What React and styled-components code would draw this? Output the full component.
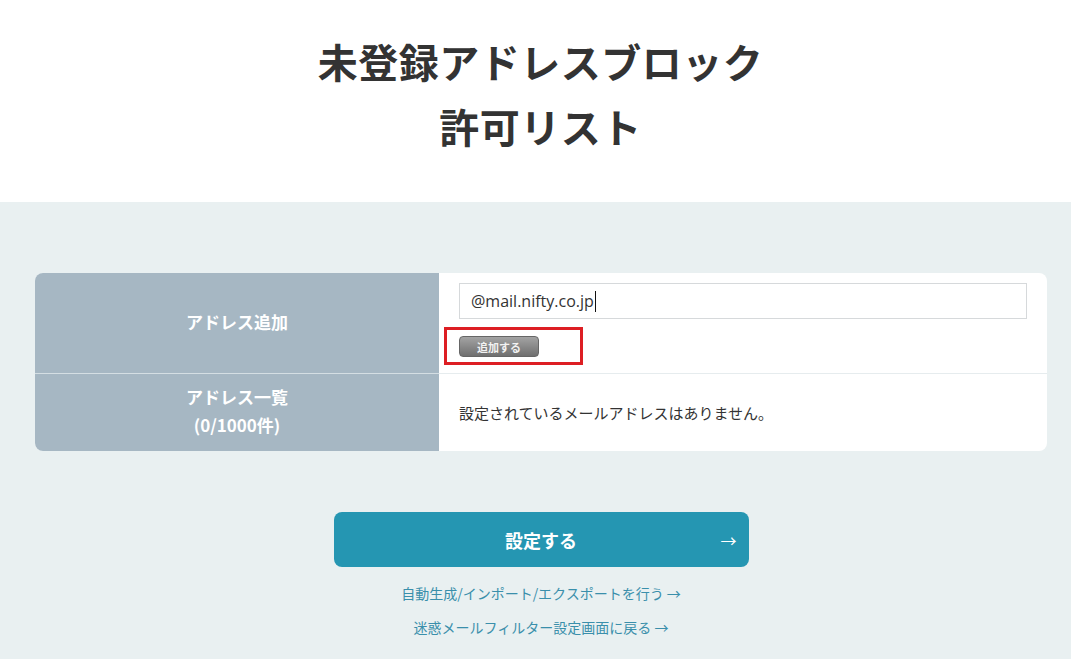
import React from "react";
import styled, { createGlobalStyle } from "styled-components";

const Global = createGlobalStyle`
  html, body {
    margin: 0;
    padding: 0;
    background: #e9f0f1;
  }
  body {
    font-family: "Noto Sans CJK JP", "Noto Sans", sans-serif;
    color: #333;
  }
`;

const Header = styled.header`
  background: #fff;
  height: 202px;
  display: flex;
  align-items: center;
  justify-content: center;
`;

const Title = styled.h1`
  margin: 0;
  padding: 0 0 14px 10px;
  font-size: 40px;
  line-height: 65px;
  font-weight: 700;
  text-align: center;
  color: #333;
  letter-spacing: 0.5px;
`;

const Main = styled.main`
  padding: 71px 24px 20px 35px;
`;

const Table = styled.div`
  display: grid;
  grid-template-columns: 404px 1fr;
  background: #fff;
  border-radius: 8px;
  overflow: hidden;
`;

const Label = styled.div`
  background: #a6b7c3;
  color: #fff;
  font-weight: 700;
  font-size: 17px;
  line-height: 28px;
  display: flex;
  align-items: center;
  justify-content: center;
  text-align: center;
  box-sizing: border-box;
  height: ${(p) => p.h}px;
  border-bottom: ${(p) => (p.divider ? "1px solid #d4dee3" : "none")};
  padding-bottom: ${(p) => (p.divider ? 2 : 4)}px;
`;

const Cell = styled.div`
  height: ${(p) => p.h}px;
  padding: ${(p) => (p.center ? "0 20px" : "10px 20px 0 20px")};
  display: flex;
  flex-direction: column;
  justify-content: ${(p) => (p.center ? "center" : "flex-start")};
  border-bottom: ${(p) => (p.divider ? "1px solid #e6ecee" : "none")};
  box-sizing: border-box;
  font-size: 15px;
  color: #333;
`;

const Input = styled.div`
  height: 36px;
  width: 568px;
  box-sizing: border-box;
  border: 1px solid #d6d9db;
  padding: 0 11px;
  display: flex;
  align-items: center;
  font-family: "Open Sans", "Noto Sans", sans-serif;
  font-size: 16px;
  color: #333;
`;

const Caret = styled.span`
  display: inline-block;
  width: 1px;
  height: 21px;
  background: #111;
  margin-left: 1px;
`;

const Highlight = styled.div`
  margin: 8px 0 0 -15px;
  width: 139px;
  height: 38px;
  box-sizing: border-box;
  border: 3px solid #dd1e23;
  padding: 6px 0 0 12px;
`;

const SmallButton = styled.div`
  width: 80px;
  height: 21px;
  border-radius: 4px;
  background: linear-gradient(#a3a3a3, #6f6f6f);
  border: 1px solid #666;
  box-sizing: border-box;
  color: #f2f2f2;
  font-size: 11px;
  font-weight: 700;
  display: flex;
  align-items: center;
  justify-content: center;
`;

const Actions = styled.div`
  display: flex;
  flex-direction: column;
  align-items: center;
  margin-top: 61px;
`;

const Submit = styled.div`
  width: 415px;
  height: 55px;
  border-radius: 8px;
  background: #2596b2;
  color: #fff;
  font-size: 18px;
  font-weight: 700;
  display: flex;
  align-items: center;
  justify-content: center;
  position: relative;
`;

const Arrow = styled.span`
  position: absolute;
  right: 12px;
  top: 50%;
  transform: translateY(-50%);
  font-size: 16px;
  font-weight: 400;
`;

const LinkText = styled.a`
  color: #3a8fab;
  font-size: 14px;
  text-decoration: none;
  margin-top: ${(p) => p.mt}px;
  line-height: 20px;
`;

export default function App() {
  return (
    <>
      <Global />
      <Header>
        <Title>
          未登録アドレスブロック
          <br />
          許可リスト
        </Title>
      </Header>
      <Main>
        <Table>
          <Label h={101} divider>
            アドレス追加
          </Label>
          <Cell h={101} divider>
            <Input>
              @mail.nifty.co.jp
              <Caret />
            </Input>
            <Highlight>
              <SmallButton>追加する</SmallButton>
            </Highlight>
          </Cell>
          <Label h={77}>
            アドレス一覧
            <br />
            (0/1000件)
          </Label>
          <Cell h={77} center>
            設定されているメールアドレスはありません。
          </Cell>
        </Table>
        <Actions>
          <Submit>
            設定する
            <Arrow>→</Arrow>
          </Submit>
          <LinkText mt={16}>自動生成/インポート/エクスポートを行う →</LinkText>
          <LinkText mt={14}>迷惑メールフィルター設定画面に戻る →</LinkText>
        </Actions>
      </Main>
    </>
  );
}
